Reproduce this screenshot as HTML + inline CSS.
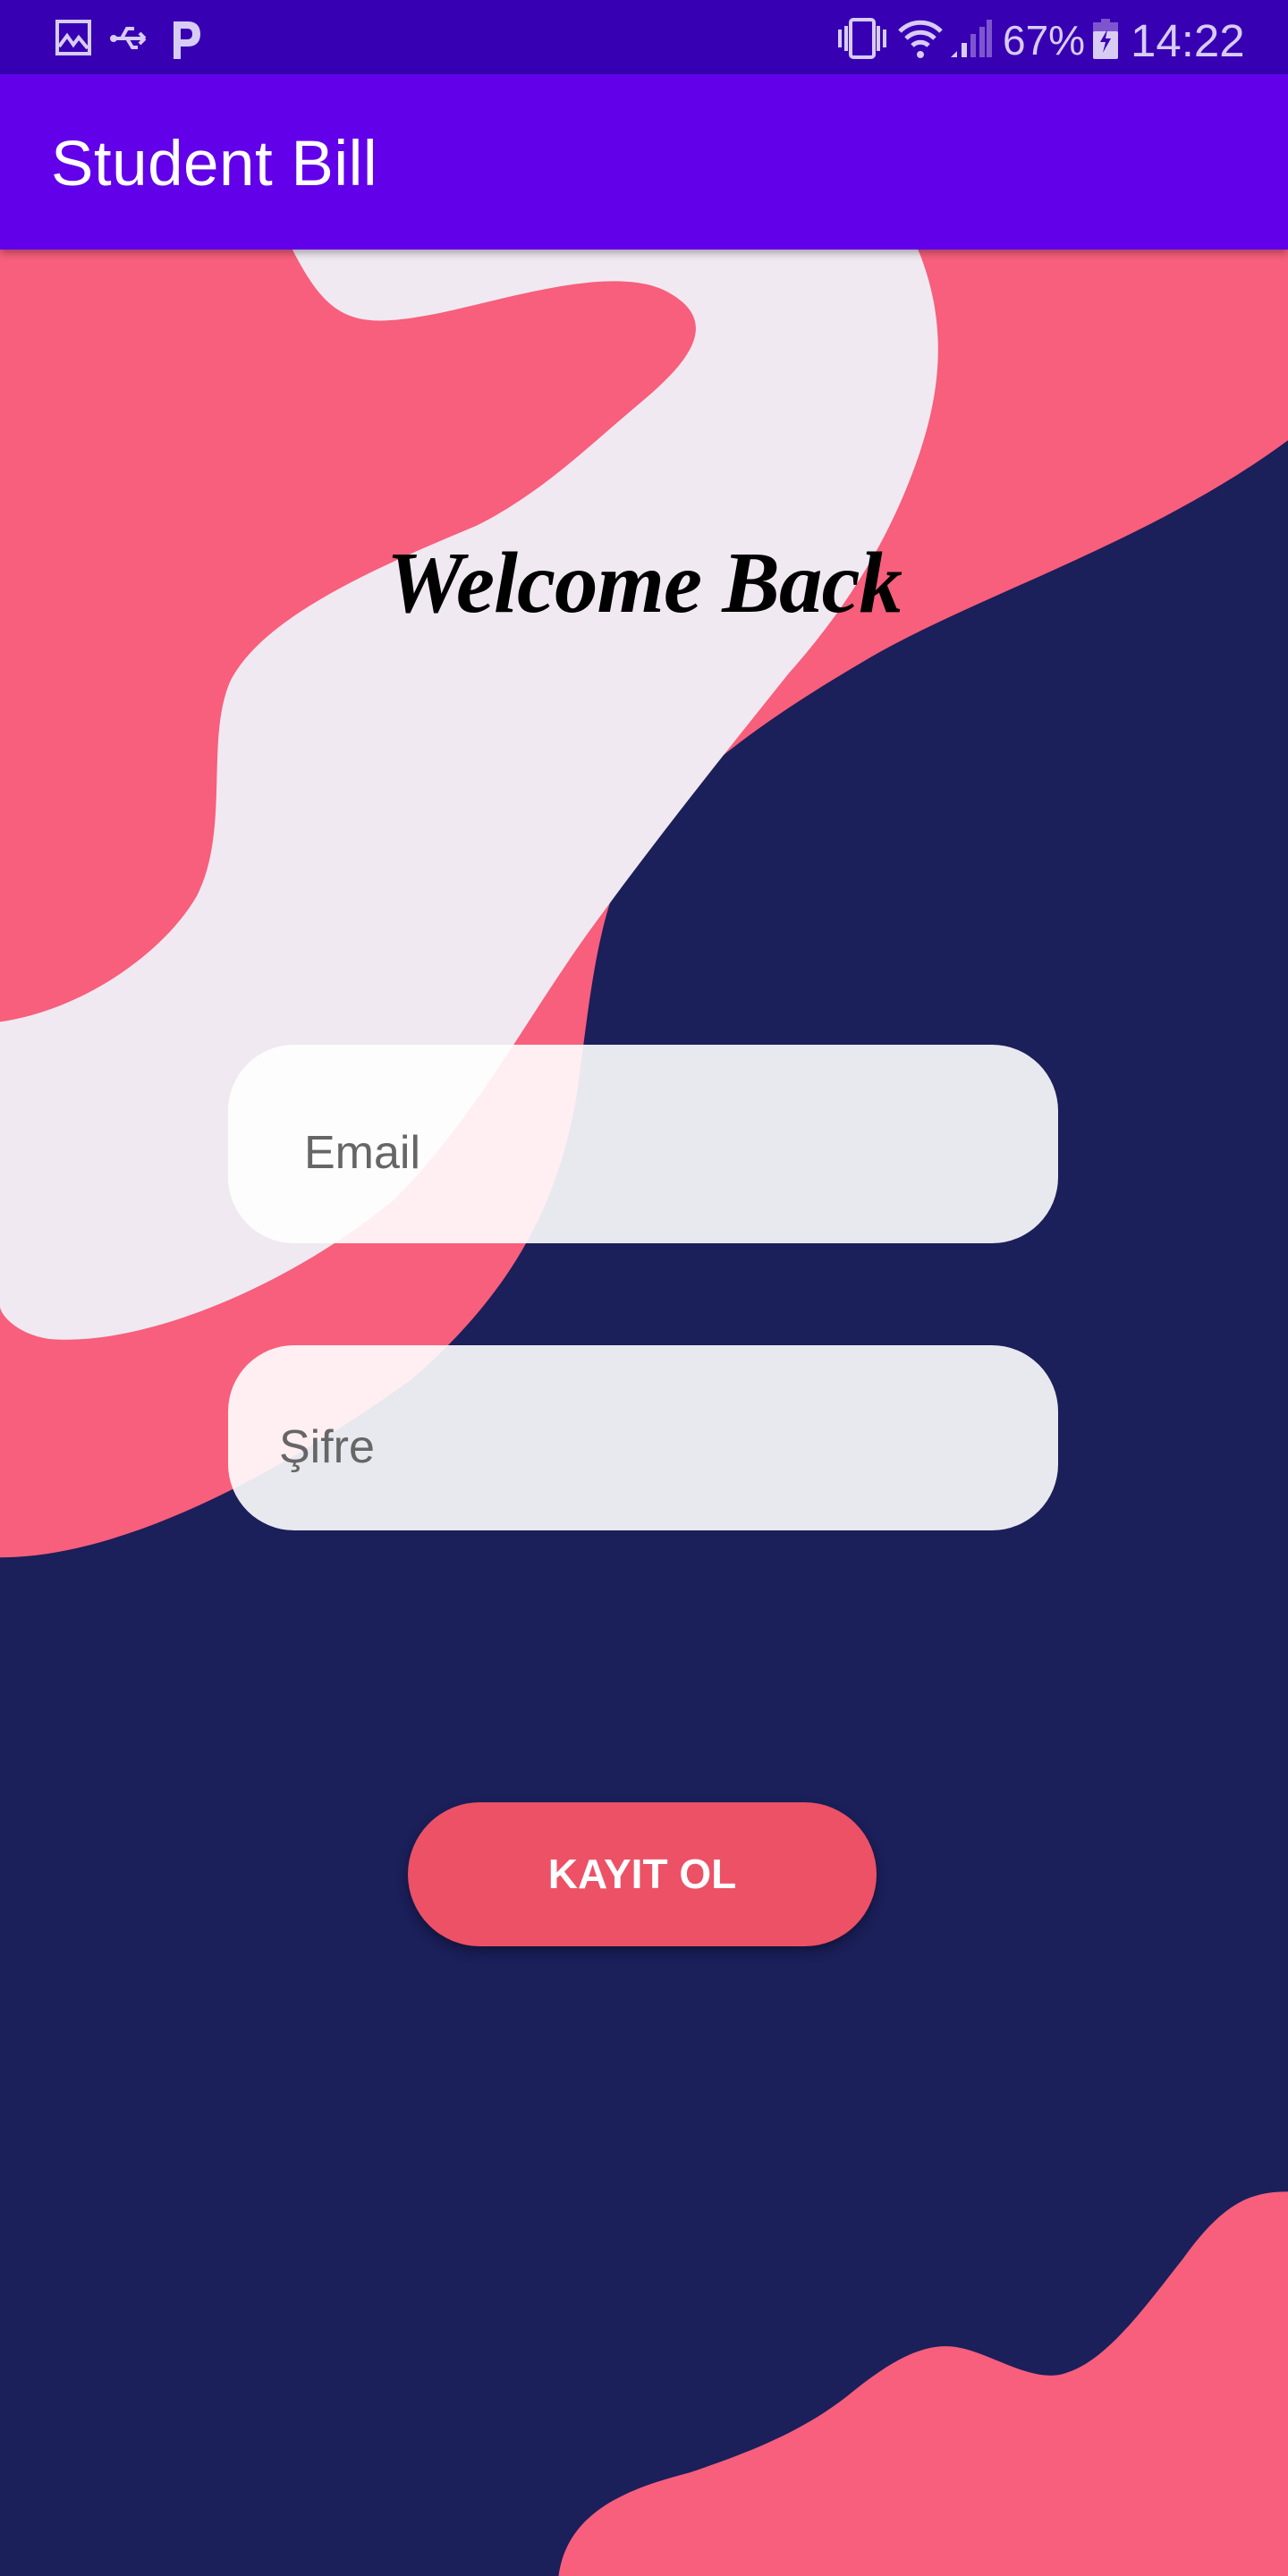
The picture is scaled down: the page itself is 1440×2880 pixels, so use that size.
<!DOCTYPE html>
<html><head><meta charset="utf-8"><style>
html,body{margin:0;padding:0;}
body{width:1440px;height:2880px;position:relative;overflow:hidden;background:#1b1f5a;font-family:"Liberation Sans",sans-serif;}
.abs{position:absolute;}
#status{left:0;top:0;width:1440px;height:83px;background:#3700b3;}
#appbar{left:0;top:83px;width:1440px;height:196px;background:#6200ea;box-shadow:0 4px 8px rgba(0,0,0,0.3);z-index:2;}
#title{left:57px;top:148px;color:#fff;font-size:71px;line-height:1;z-index:3;letter-spacing:0.5px;}
.st{color:#d8ccf5;font-size:50px;line-height:1;}
.field{background:rgba(255,255,255,0.9);border-radius:74px;}
.ph{color:#666;font-size:52px;line-height:1;}
#btn{left:456px;top:2015px;width:524px;height:161px;border-radius:81px;background:#ec5166;box-shadow:0 6px 12px rgba(0,0,0,0.35);color:#fff;font-weight:bold;font-size:46px;text-align:center;line-height:161px;}
#welcome{left:0;width:1440px;top:596px;text-align:center;font-family:"Liberation Serif",serif;font-weight:bold;font-style:italic;font-size:97px;color:#000;letter-spacing:-1px;}
</style></head><body>
<svg class="abs" style="left:0;top:0" width="1440" height="2880" viewBox="0 0 784 1568" preserveAspectRatio="none">
<path fill="#f75f7c" d="M0,150 L784,150 L784,268 C700,330 600,360 530,400 C470,435 420,470 390,510 C365,545 360,600 352,660 C343,720 320,780 250,840 C180,890 80,948 0,948 Z"/>
<path fill="#f0e9f1" d="M178,150 L558,150 C575,190 575,230 560,275 C545,320 520,365 480,410 C440,460 400,510 360,565 C320,620 290,680 240,730 C180,780 90,820 30,815 C10,812 0,800 0,795 L0,622 C50,615 100,580 120,545 C140,505 125,450 140,415 C160,375 230,345 290,320 C330,300 360,270 390,245 C420,220 440,195 405,177 C370,160 300,185 260,192 C215,200 200,195 178,152 Z"/>
<path fill="#f75f7c" d="M340,1568 C345,1530 380,1515 420,1505 C455,1493 490,1480 520,1455 C545,1435 565,1425 584,1429 C605,1433 630,1452 650,1444 C675,1436 700,1400 720,1375 C745,1340 762,1334 784,1334 L784,1568 Z"/>
</svg>
<div id="status" class="abs">
  <svg class="abs" style="left:62px;top:22px" width="40" height="40" viewBox="0 0 40 40"><rect x="2" y="2" width="36" height="36" fill="none" stroke="#d8ccf5" stroke-width="4"/><path d="M4,30 L13,18 L20,28 L26,20 L36,32" fill="none" stroke="#d8ccf5" stroke-width="4"/></svg>
  <svg class="abs" style="left:122px;top:26px" width="46" height="34" viewBox="0 0 46 34"><path d="M2,17 L40,17 M40,17 L34,11 M40,17 L34,23 M14,17 L20,6 L28,6 M20,17 L26,27 L32,27" fill="none" stroke="#d8ccf5" stroke-width="4"/><circle cx="5" cy="17" r="4" fill="#d8ccf5"/></svg>
  <svg class="abs" style="left:190px;top:22px" width="36" height="44" viewBox="0 0 36 44"><path d="M4,44 L4,2 L20,2 C30,2 34,8 34,16 C34,24 30,30 20,30 L12,30 L12,44 Z M12,10 L12,22 L19,22 C24,22 25,19 25,16 C25,13 24,10 19,10 Z" fill="#d8ccf5" fill-rule="evenodd"/></svg>
  <svg class="abs" style="left:937px;top:20px" width="54" height="46" viewBox="0 0 54 46"><rect x="14" y="2" width="26" height="42" rx="3" fill="none" stroke="#d8ccf5" stroke-width="4"/><rect x="0" y="13" width="4" height="20" fill="#d8ccf5"/><rect x="7" y="9" width="4" height="28" fill="#d8ccf5"/><rect x="43" y="9" width="4" height="28" fill="#d8ccf5"/><rect x="50" y="13" width="4" height="20" fill="#d8ccf5"/></svg>
  <svg class="abs" style="left:1003px;top:20px" width="52" height="46" viewBox="0 0 52 46"><path d="M3,15 C16,2 36,2 49,15 M10,23 C19,14 33,14 42,23 M17,31 C22,26 30,26 35,31" fill="none" stroke="#d8ccf5" stroke-width="5"/><circle cx="26" cy="41" r="4" fill="#d8ccf5"/></svg>
  <svg class="abs" style="left:1063px;top:20px" width="46" height="46" viewBox="0 0 46 46"><path d="M0,44 L7,37 L7,44Z" fill="#d8ccf5"/><rect x="12" y="28" width="6" height="16" fill="#d8ccf5"/><rect x="22" y="18" width="6" height="26" fill="#7f55cf"/><rect x="32" y="10" width="6" height="34" fill="#7f55cf"/><rect x="40" y="2" width="6" height="42" fill="#7f55cf"/></svg>
  <div class="abs st" style="left:1121px;top:22px;font-size:46px;">67%</div>
  <svg class="abs" style="left:1222px;top:21px" width="28" height="45" viewBox="0 0 28 45"><rect x="9" y="0" width="10" height="5" fill="#7f55cf"/><rect x="0" y="4" width="28" height="12" fill="#7f55cf"/><rect x="0" y="14" width="28" height="31" rx="2" fill="#d8ccf5"/><path d="M16,12 L8,26 L14,26 L11,38 L20,22 L14,22 Z" fill="#3700b3"/></svg>
  <div class="abs st" style="left:1264px;top:20px;font-size:51px;">14:22</div>
</div>
<div id="appbar" class="abs"></div>
<div id="title" class="abs">Student Bill</div>
<div id="welcome" class="abs">Welcome Back</div>
<div class="abs field" style="left:255px;top:1168px;width:928px;height:222px;"></div>
<div class="abs ph" style="left:340px;top:1263px;">Email</div>
<div class="abs field" style="left:255px;top:1504px;width:928px;height:207px;"></div>
<div class="abs ph" style="left:312px;top:1592px;">Şifre</div>
<div id="btn" class="abs">KAYIT OL</div>
</body></html>
